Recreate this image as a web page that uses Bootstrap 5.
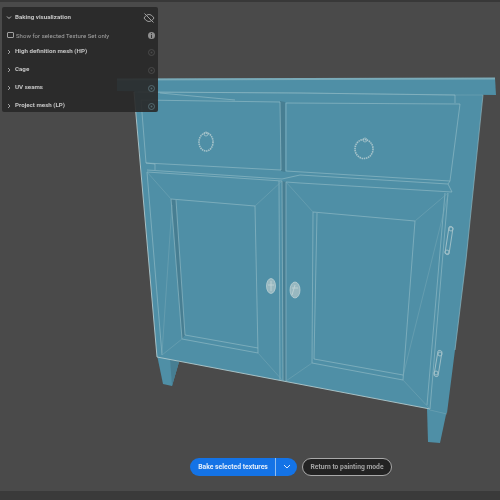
<!DOCTYPE html>
<html lang="en">
<head>
<meta charset="utf-8">
<title>Baking visualization</title>
<link href="https://cdn.jsdelivr.net/npm/bootstrap@5.3.0/dist/css/bootstrap.min.css" rel="stylesheet">
<style>
html,body{margin:0;height:100%;background:#4a4a4a;overflow:hidden}
.stage{width:500px;height:500px;background:#4a4a4a;font-family:Roboto,"Liberation Sans",sans-serif;overflow:hidden}
.topband{height:2px;background:#383838}
.botband{height:9px;background:#3a3a3a;bottom:0;left:0;right:0}
.scene{left:0;top:0;width:500px;height:500px;filter:blur(.4px)}
.body-fill{fill:#4f8fa6}
.shade{fill:#477e92}
.wire{fill:none;stroke:#92bbc6;stroke-width:.65}
.wire-b{fill:none;stroke:#b0cace;stroke-width:.9}
.wire-t{fill:none;stroke:#78a9b7;stroke-width:.5}
.panel{left:2px;top:7px;width:156px;height:105px;background:rgba(40,40,40,.9);border-radius:2px;color:#c6c6c6;font-size:6.2px;font-weight:700;padding:2px 3px 0 4px;filter:blur(.3px)}
.prow{height:18px}
.prow-check{height:16px}
.cklabel{font-weight:400;color:#a6a6a6;font-size:6px;letter-spacing:.04px}
.ckbox{width:6.500px;height:6.500px;border:1px solid #a0a0a0;border-radius:1px;margin-right:2.500px;margin-left:1px}
.chev{width:6px;margin-right:3px}
.bakebar{left:190px;top:458px;filter:blur(.25px)}
.bake.btn{background:#1473e6;border:0;color:#e3eefb;font-size:6.800px;font-weight:700;height:18px;line-height:18px;padding:0;border-radius:9px 0 0 9px;width:86px}
.bakemore.btn{background:#1473e6;border:0;border-left:1px solid #8fbdf0;height:18px;padding:0 0 1px;border-radius:0 9px 9px 0;width:22px;line-height:12px}
.retbtn.btn{background:#232323;border:1px solid #a9a9a9;color:#a3a3a3;font-size:6.750px;font-weight:700;height:18px;line-height:15px;padding:0;border-radius:9px;width:90px;margin-left:5px}
</style>
</head>
<body>
<div class="stage position-relative">
  <div class="topband"></div>
  <svg class="scene position-absolute" viewBox="0 0 500 500" aria-hidden="true">
    <!-- legs -->
    <polygon class="body-fill" points="157,355 163,384 172,386 179,362 170,358"/>
    <polygon class="shade" points="170,358 172,386 179,362"/>
    <polygon class="body-fill" points="427,408 428,442 440,443 447,410"/>
    <path class="wire-t" d="M430,410L447,414"/>
    <!-- body -->
    <polygon class="body-fill" points="134,90 483,94 466,260 455,350 447,413 430,409 283,381 157,357"/>
    <!-- top slab -->
    <polygon class="body-fill" points="117,79 495,78 496,95 300,93 117,91"/>
    <path d="M117,79.500L495,78.500" fill="none" stroke="#7aabb9" stroke-width="2"/>
    <path class="wire-t" d="M134,92L300,93L455,95L483,95"/>
    <!-- dark gaps -->
    <polygon class="shade" points="280,101 285,102 285,172 281,171"/>
    <polygon class="shade" points="282,181 286,182 286,381 283,381"/>
    <polygon class="shade" points="171,199 176,200 185,335 182,339"/>
    <!-- edges -->
    <path class="wire-b" d="M134,92L157,357L283,381L430,409"/>
    <path class="wire" d="M483,95L466,260L455,350"/>
    <!-- drawers -->
    <path class="wire" d="M141,100L280,102L281,170L146,163ZM160,93L235,100M286,103L460,104L450,181L286,171Z"/>
    <path class="wire" d="M138,92L300,93L455,95V103M146,163L155,164V170M147,170L282,179L300,175L448,184L450,181M147,172L282,181M286,182L300,183L452,192L448,184"/>
    <!-- left door -->
    <path class="wire" d="M147,172L162,355M282,181L283,381M279,181L280,380"/>
    <path class="wire" d="M171,199L255,206L258,353L182,339ZM176,200L185,335L258,348"/>
    <path class="wire-t" d="M147,172L171,199M282,181L255,206M258,353L283,381M182,339L162,355M172,205L162,353"/>
    <!-- right door -->
    <path class="wire" d="M286,182L286,381M448,193L430,409M445,193L427,405"/>
    <path class="wire" d="M313,212L415,221L403,380L312,363ZM317,213L314,359L403,375"/>
    <path class="wire-t" d="M286,182L313,212M448,193L415,221M430,409L403,380M286,381L312,363M448,195L403,376"/>
    <!-- knobs -->
    <g fill="none" stroke="#a6c3ca">
      <ellipse cx="206" cy="142" rx="7" ry="9" stroke-width="1.600" stroke-dasharray="1.500 .7"/>
      <circle cx="206" cy="134" r="2" stroke-width=".8"/>
      <ellipse cx="364" cy="149" rx="9" ry="9.500" stroke-width="1.600" stroke-dasharray="1.500 .7"/>
      <circle cx="365" cy="140" r="2" stroke-width=".8"/>
      <path stroke-width=".9" d="M449,227A2.500,2.500 0 0 1 453,228L449,254A2.500,2.500 0 0 1 445,253Z"/>
      <circle cx="451" cy="229" r="2" stroke-width=".9"/>
      <circle cx="447" cy="252" r="2" stroke-width=".9"/>
      <path stroke-width=".9" d="M438,351A2.500,2.500 0 0 1 442,352L438,376A2.500,2.500 0 0 1 434,375Z"/>
      <circle cx="440" cy="354" r="2" stroke-width=".9"/>
      <circle cx="436" cy="373" r="2" stroke-width=".9"/>
    </g>
    <g fill="#98b8c0" stroke="#c2d4d7" stroke-width=".7">
      <ellipse cx="271" cy="286" rx="4.500" ry="7.500"/>
      <ellipse cx="295" cy="290" rx="5" ry="8"/>
    </g>
    <path fill="none" stroke="#c8d8da" stroke-width=".7" d="M271,281V291M268,285H274M295,285L292,295M292,288H298"/>
  </svg>

  <div class="panel position-absolute">
    <div class="prow d-flex align-items-center">
      <svg class="chev" viewBox="0 0 6 6" height="6" aria-hidden="true"><path d="M1,1.500L3,3.500L5,1.500" fill="none" stroke="#c6c6c6" stroke-width=".9"/></svg>
      <span class="flex-grow-1">Baking visualization</span>
      <svg width="12" height="10" viewBox="0 0 12 10" aria-hidden="true"><path d="M1,5C3,2 5,1.500 6,1.500S9,2 11,5C9,8 7,8.500 6,8.500S3,8 1,5ZM1.500,.500L10.500,9.500" fill="none" stroke="#a0a0a0" stroke-width="1"/></svg>
    </div>
    <div class="prow-check d-flex align-items-center">
      <span class="ckbox"></span>
      <span class="cklabel flex-grow-1">Show for selected Texture Set only</span>
      <svg width="7" height="7" viewBox="0 0 7 7" aria-hidden="true"><circle cx="3.500" cy="3.500" r="3.500" fill="#8f8f8f"/><path d="M3.500,1V1.900M3.500,2.800V6" stroke="#333" stroke-width="1"/></svg>
    </div>
    <div class="prow d-flex align-items-center">
      <svg class="chev" viewBox="0 0 6 6" height="6" aria-hidden="true"><path d="M2,1L4,3L2,5" fill="none" stroke="#b0b0b0" stroke-width=".9"/></svg>
      <span class="flex-grow-1">High definition mesh (HP)</span>
      <svg width="7" height="7" viewBox="0 0 7 7" aria-hidden="true"><circle cx="3.500" cy="3.500" r="3" fill="none" stroke="#4a4a4a"/><circle cx="3.500" cy="3.500" r="1" fill="#4a4a4a"/></svg>
    </div>
    <div class="prow d-flex align-items-center">
      <svg class="chev" viewBox="0 0 6 6" height="6" aria-hidden="true"><path d="M2,1L4,3L2,5" fill="none" stroke="#b0b0b0" stroke-width=".9"/></svg>
      <span class="flex-grow-1">Cage</span>
      <svg width="7" height="7" viewBox="0 0 7 7" aria-hidden="true"><circle cx="3.500" cy="3.500" r="3" fill="none" stroke="#4a4a4a"/><circle cx="3.500" cy="3.500" r="1" fill="#4a4a4a"/></svg>
    </div>
    <div class="prow d-flex align-items-center">
      <svg class="chev" viewBox="0 0 6 6" height="6" aria-hidden="true"><path d="M2,1L4,3L2,5" fill="none" stroke="#b0b0b0" stroke-width=".9"/></svg>
      <span class="flex-grow-1">UV seams</span>
      <svg width="7" height="7" viewBox="0 0 7 7" aria-hidden="true"><circle cx="3.500" cy="3.500" r="3" fill="none" stroke="#546a70"/><circle cx="3.500" cy="3.500" r="1" fill="#546a70"/></svg>
    </div>
    <div class="prow d-flex align-items-center">
      <svg class="chev" viewBox="0 0 6 6" height="6" aria-hidden="true"><path d="M2,1L4,3L2,5" fill="none" stroke="#b0b0b0" stroke-width=".9"/></svg>
      <span class="flex-grow-1">Project mesh (LP)</span>
      <svg width="7" height="7" viewBox="0 0 7 7" aria-hidden="true"><circle cx="3.500" cy="3.500" r="3" fill="none" stroke="#546a70"/><circle cx="3.500" cy="3.500" r="1" fill="#546a70"/></svg>
    </div>
  </div>

  <div class="bakebar position-absolute d-flex">
    <div class="btn-group">
      <button type="button" class="btn bake">Bake selected textures</button>
      <button type="button" class="btn bakemore"><svg width="8" height="6" viewBox="0 0 8 6" aria-hidden="true"><path d="M1,1L4,4L7,1" fill="none" stroke="#dbe9fb" stroke-width="1"/></svg></button>
    </div>
    <button type="button" class="btn retbtn">Return to painting mode</button>
  </div>
  <div class="botband position-absolute"></div>
</div>
<script src="https://cdn.jsdelivr.net/npm/bootstrap@5.3.0/dist/js/bootstrap.bundle.min.js"></script>
</body>
</html>
